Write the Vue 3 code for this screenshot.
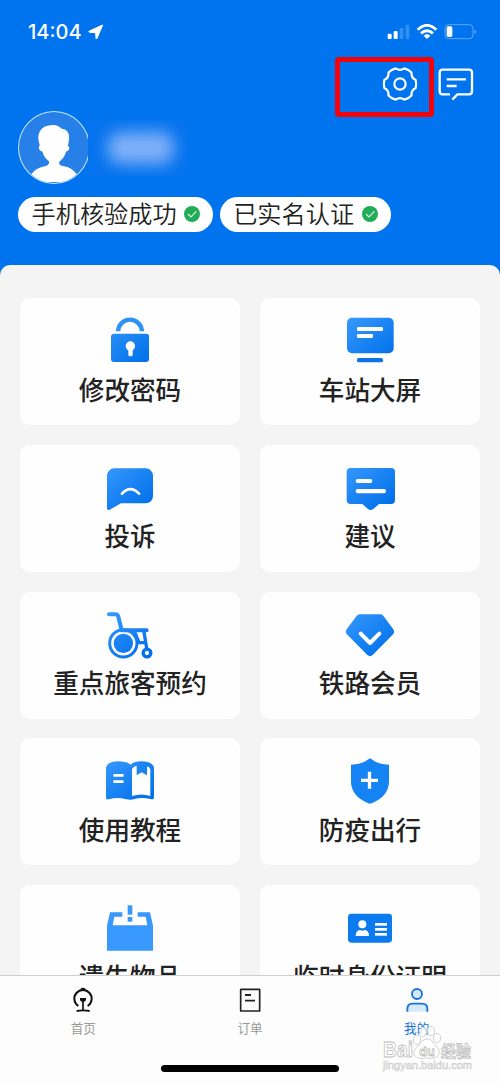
<script setup>
import { ref } from 'vue'

const services = [
  { icon: 'lock', label: '修改密码' },
  { icon: 'screen', label: '车站大屏' },
  { icon: 'complaint', label: '投诉' },
  { icon: 'suggestion', label: '建议' },
  { icon: 'wheelchair', label: '重点旅客预约' },
  { icon: 'member', label: '铁路会员' },
  { icon: 'book', label: '使用教程' },
  { icon: 'shield', label: '防疫出行' },
  { icon: 'lost', label: '遗失物品' },
  { icon: 'idcard', label: '临时身份证明' }
]

const badges = ['手机核验成功', '已实名认证']

const tabs = [
  { id: 'home', label: '首页' },
  { id: 'orders', label: '订单' },
  { id: 'mine', label: '我的' }
]

const activeTab = ref('mine')
</script>

<template>
  <div class="app">
    <header class="header">
      <div class="status">
        <div class="status__left">
          <span class="status__time">14:04</span>
          <svg class="status__arrow" viewBox="0 0 48 48">
            <path d="M44 3 27 43q-2 4-3 0L23 26 5 25q-5-1-1-4Z" fill="#fff" stroke="#fff" stroke-width="3" stroke-linejoin="round" />
          </svg>
        </div>
        <svg class="status__icons" viewBox="201 72 270 48">
          <g fill="#fff">
            <rect x="203" y="101" width="12" height="16" rx="3" />
            <rect x="221" y="93" width="12" height="24" rx="3" />
            <rect x="239" y="84" width="11" height="33" rx="3" opacity=".2" />
            <rect x="257" y="74" width="11" height="43" rx="3" opacity=".2" />
            <path d="M311 107q10-8 20 0l-10 10Z" />
          </g>
          <g fill="none" stroke="#fff" stroke-width="8.5">
            <path d="M293 89q28-26 56 0" />
            <path d="M303 100q18-16 36 0" />
          </g>
          <rect x="375" y="74" width="84" height="42" rx="11" fill="none" stroke="#fff" stroke-width="2.5" opacity=".45" />
          <rect x="380" y="79" width="17" height="32" rx="5" fill="#fff" />
          <path d="M464 89q7 6 0 13Z" fill="#fff" opacity=".6" />
        </svg>
      </div>

      <div class="actions">
        <button class="actions__button" type="button" aria-label="设置">
          <svg viewBox="0 0 120 120">
            <g fill="none" stroke="#fff" stroke-width="6.5" stroke-linejoin="round">
              <path d="M107 48Q110 60 107 72Q93 79 94.500 94.500Q86 104 73 107Q60 98 47 107Q34 104 25.500 94.500Q27 79 13 72Q10 60 13 48Q27 41 25.500 25.500Q34 16 47 13Q60 22 73 13Q86 16 94.500 25.500Q93 41 107 48Z" />
              <circle cx="60" cy="60" r="17" />
            </g>
          </svg>
        </button>
        <button class="actions__button" type="button" aria-label="消息">
          <svg viewBox="0 0 120 120">
            <g fill="none" stroke="#fff" stroke-width="7" stroke-linejoin="round">
              <path d="M42 91H20q-9 0-9-9V26q0-9 9-9H99q9 0 9 9V82q0 9-9 9H64L49 107" />
              <path d="M32 46H90M32 66H62" />
            </g>
          </svg>
        </button>
        <span class="actions__mark"></span>
      </div>

      <div class="profile">
        <div class="profile__avatar">
          <svg viewBox="54 34 216 216">
            <path d="M92 226Q105 207 136 201Q148 198 147 187Q130 174 126 156Q116 155 115 143L118 136Q109 112 118 94Q130 74 158 74Q174 73 186 86Q216 88 206 133L205 139Q213 143 206 153L199 157Q196 174 178 188Q177 199 190 201Q218 206 232 226Q200 256 162 256Q122 256 92 226Z" fill="#fff" />
          </svg>
        </div>
        <div class="profile__name"><span class="profile__blur"></span></div>
      </div>

      <div class="badges">
        <div v-for="badge in badges" :key="badge" class="badge">
          <span class="badge__label">{{ badge }}</span>
          <svg class="badge__check" viewBox="0 0 48 48">
            <circle cx="24" cy="24" r="24" fill="#22ac58" />
            <path d="M12 24l9 9 16-17" fill="none" stroke="#d8f5e2" stroke-width="3.5" />
          </svg>
        </div>
      </div>
    </header>

    <main class="panel">
      <div class="grid">
        <div v-for="item in services" :key="item.icon" class="card">
          <svg class="card__icon" viewBox="0 0 168 168">
            <defs>
              <linearGradient :id="`g-${item.icon}`" gradientUnits="userSpaceOnUse" x1="25" y1="20" x2="130" y2="150">
                <stop offset="0" stop-color="#3597fc" />
                <stop offset="1" stop-color="#0070ea" />
              </linearGradient>
            </defs>

            <g v-if="item.icon === 'lock'">
              <path d="M48.500 58a35.500 35 0 0 1 71 0" fill="none" stroke="#2f93f5" stroke-width="13" />
              <rect x="27" y="65" width="114" height="85" rx="9" fill="url(#g-lock)" />
              <circle cx="85" cy="102" r="14" fill="#fff" />
              <rect x="79" y="108" width="13" height="25" rx="5" fill="#fff" />
            </g>

            <g v-else-if="item.icon === 'screen'">
              <rect x="15" y="17" width="140" height="107" rx="15" fill="url(#g-screen)" />
              <rect x="45" y="45" width="78" height="12" rx="4" fill="#fff" />
              <rect x="45" y="66" width="48" height="12" rx="4" fill="#fff" />
              <rect x="45" y="138" width="78" height="13" rx="5" fill="#0e74e4" />
            </g>

            <g v-else-if="item.icon === 'complaint'">
              <path d="M37 28H131a22 22 0 0 1 22 22v61a22 22 0 0 1-22 22H57L23 152q-8 3-8-5V50a22 22 0 0 1 22-22Z" fill="url(#g-complaint)" />
              <path d="M60 104Q85 77 111 104" fill="none" stroke="#fff" stroke-width="8" stroke-linecap="round" />
            </g>

            <g v-else-if="item.icon === 'suggestion'">
              <path d="M26 27H147q12 0 12 12v84q0 12-12 12H111L94 150q-8 6-16 0L61 135H26q-12 0-12-12V39q0-12 12-12Z" fill="url(#g-suggestion)" />
              <rect x="41" y="60" width="50" height="12" rx="6" fill="#fff" />
              <rect x="41" y="90" width="91" height="13" rx="6" fill="#fff" />
            </g>

            <g v-else-if="item.icon === 'wheelchair'" fill="none" stroke="url(#g-wheelchair)" stroke-linecap="round">
              <path d="M21 25H40Q47 25 49 32L59 73L134 72.500" stroke-width="12" stroke-linejoin="round" />
              <circle cx="64" cy="112" r="41" stroke-width="9" />
              <circle cx="64" cy="112" r="29" fill="url(#g-wheelchair)" stroke="none" />
              <path d="M126 78L134 127M100 82L111 110H129" stroke-width="10" />
              <circle cx="135" cy="141" r="11.500" stroke-width="10" />
            </g>

            <g v-else-if="item.icon === 'member'">
              <path d="M53 25H115q6 0 10 6L155 71q4 7-1 13L92 147q-8 7-16 0L14 84q-5-6-1-13L43 31q4-6 10-6Z" fill="url(#g-member)" />
              <path d="M56 83L84 111L112 83" fill="none" stroke="#fff" stroke-width="12" stroke-linecap="round" stroke-linejoin="round" />
            </g>

            <g v-else-if="item.icon === 'book'">
              <path d="M12 46Q18 28 48 28Q74 28 86 38Q96 28 118 28Q150 28 156 46V136Q156 143 149 142Q120 134 98 141Q86 145 70 141Q45 135 20 142Q12 144 12 137Z" fill="url(#g-book)" />
              <path d="M90 51Q95 42 104 41V70L119 61L135 70V43Q145 47 145 54V132Q118 123 90 132Z" fill="#fff" />
              <rect x="34" y="66" width="31" height="8" rx="2" fill="#fff" />
              <rect x="34" y="85" width="31" height="8" rx="2" fill="#fff" />
            </g>

            <g v-else-if="item.icon === 'shield'">
              <path d="M84 19Q107 38 141 38V88Q141 132 91 153Q84 156 77 153Q27 132 27 88V38Q61 38 84 19Z" fill="#1483f4" />
              <path d="M57 85H108M82.500 59.500V110.500" stroke="#fff" stroke-width="10" />
            </g>

            <g v-else-if="item.icon === 'lost'" fill="#3898fc">
              <path d="M24 40H61V53H37L32 79H136L131 53H107V40H144L153 80V155H15V80Z" />
              <rect x="77" y="19" width="14" height="28" />
              <rect x="77" y="54" width="14" height="14" />
            </g>

            <g v-else>
              <rect x="18" y="44" width="132" height="87" rx="10" fill="#0c7bef" />
              <g fill="#fff">
                <circle cx="61" cy="76" r="12" />
                <path d="M41 111Q41 94 54 93Q61 97 68 93Q81 94 81 111Z" />
                <rect x="99" y="72" width="36" height="8" />
                <rect x="99" y="87" width="36" height="8" />
                <rect x="99" y="102" width="36" height="8" />
              </g>
            </g>
          </svg>
          <span class="card__label">{{ item.label }}</span>
        </div>
      </div>
    </main>

    <nav class="tabbar">
      <div class="tabbar__items">
        <button
          v-for="tab in tabs"
          :key="tab.id"
          class="tab"
          :class="{ 'tab--active': tab.id === activeTab }"
          type="button"
          @click="activeTab = tab.id"
        >
          <svg class="tab__icon" viewBox="0 0 84 84">
            <g v-if="tab.id === 'home'" fill="none" stroke="#111" stroke-width="6">
              <path d="M28 60A26 26 0 1 1 56 60" />
              <path d="M36 11Q42 6 48 11" />
              <path d="M42 42V73" stroke-width="5" />
              <path d="M23 75Q42 71 62 75" stroke-width="5.500" />
              <path d="M33 36H51V43L46 47H38L33 43Z" fill="#111" stroke="none" />
            </g>
            <g v-else-if="tab.id === 'orders'" fill="none" stroke="#222" stroke-width="5">
              <rect x="14" y="10" width="57" height="65" rx="1" />
              <path d="M27 27H45M27 44H57" stroke-width="5.500" />
            </g>
            <g v-else fill="#d6e8fb" stroke="#1474da" stroke-width="5.500">
              <circle cx="42" cy="24" r="15" />
              <path d="M13 77V69Q13 53 29 53H57Q73 53 73 69V77" />
            </g>
          </svg>
          <span class="tab__label">{{ tab.label }}</span>
        </button>
      </div>
      <div class="tabbar__indicator"></div>
    </nav>

    <div class="watermark">
      <svg viewBox="0 0 100 50">
        <g fill="#fff" fill-opacity=".8" stroke="#c6c6c6" stroke-width=".8">
          <ellipse cx="40" cy="17" rx="3.5" ry="4.5" />
          <ellipse cx="46" cy="9" rx="3.5" ry="4.5" />
          <ellipse cx="54" cy="8" rx="3.5" ry="4.5" />
          <ellipse cx="60" cy="15" rx="3.5" ry="4.5" />
          <path d="M50 16Q55 16 57 21Q65 28 61 33Q58 36 50 35Q41 37 37 32Q36 27 42 22Q45 16 50 16Z" />
        </g>
        <g class="watermark__text">
          <text x="6" y="34" font-size="22" textLength="30" lengthAdjust="spacingAndGlyphs">Bai</text>
          <text x="42" y="33" font-size="13">du</text>
          <text class="watermark__cjk" x="64" y="34" font-size="16" textLength="30" lengthAdjust="spacingAndGlyphs">经验</text>
          <text class="watermark__url" x="6" y="46" font-size="10.500" textLength="89" lengthAdjust="spacingAndGlyphs">jingyan.baidu.com</text>
        </g>
      </svg>
    </div>
  </div>
</template>

<style>
body {
  margin: 0;
}
</style>

<style scoped>
.app {
  position: relative;
  display: flex;
  flex-direction: column;
  width: 500px;
  height: 1082px;
  overflow: hidden;
  background: #0073ee;
  font-family: 'Noto Sans CJK SC', sans-serif;
}

button {
  padding: 0;
  border: none;
  background: none;
  font-family: inherit;
  cursor: pointer;
}

svg {
  display: block;
}

.header {
  flex: none;
  height: 265px;
}

.status {
  display: flex;
  align-items: center;
  justify-content: space-between;
  height: 64px;
  padding: 0 23px 0 28px;
}

.status__left {
  display: flex;
  align-items: center;
  gap: 6px;
}

.status__time {
  font-family: Inter, sans-serif;
  font-size: 20px;
  font-weight: 500;
  color: #fff;
}

.status__arrow {
  width: 16px;
  height: 16px;
}

.status__icons {
  width: 90px;
  height: 16px;
}

.actions {
  position: relative;
  display: flex;
  justify-content: flex-end;
  gap: 16px;
  height: 40px;
  padding-right: 24px;
}

.actions__button {
  width: 40px;
  height: 40px;
}

/* red highlight laid over the settings button */
.actions__mark {
  position: absolute;
  top: -7px;
  left: 335px;
  box-sizing: border-box;
  width: 99px;
  height: 60px;
  border: 5px solid #f3020c;
  border-radius: 4px;
}

.profile {
  display: flex;
  align-items: center;
  margin-top: 7px;
  padding-left: 18px;
}

.profile__avatar {
  box-sizing: border-box;
  width: 72px;
  height: 73px;
  overflow: hidden;
  border: 1.5px solid #c4e4fc;
  border-radius: 50%;
  background: #2680e8;
}

.profile__name {
  display: flex;
  align-items: center;
  width: 100px;
  height: 56px;
  margin-left: -2px;
  overflow: hidden;
  background: #0573ee;
}

.profile__blur {
  width: 66px;
  height: 32px;
  margin-left: 20px;
  border-radius: 12px;
  background: #80b0f8;
  filter: blur(8px);
}

.badges {
  display: flex;
  gap: 6.5px;
  margin-top: 13px;
  padding-left: 18px;
}

.badge {
  display: flex;
  align-items: center;
  gap: 7.5px;
  height: 34.5px;
  padding: 0 13px 0 13.5px;
  border-radius: 18px;
  background: #fff;
}

.badge__label {
  margin-top: -3px;
  font-size: 24.2px;
  font-weight: 350;
  line-height: 34px;
  color: #222;
}

.badge__check {
  width: 16px;
  height: 16px;
}

.panel {
  flex: 1;
  min-height: 0;
  overflow: hidden;
  padding: 33px 20px 0;
  border-radius: 10px 10px 0 0;
  background: #f4f4f4;
}

.grid {
  display: grid;
  grid-template-columns: 1fr 1fr;
  gap: 19.75px 20px;
}

.card {
  display: flex;
  flex-direction: column;
  align-items: center;
  box-sizing: border-box;
  height: 127px;
  padding-top: 14px;
  border-radius: 10px;
  background: #fefefe;
}

.card__icon {
  flex: none;
  width: 56px;
  height: 56px;
}

.card__label {
  margin-top: 1.5px;
  font-size: 25.6px;
  font-weight: 500;
  line-height: 37px;
  white-space: nowrap;
  color: #222;
}

.tabbar {
  flex: none;
  box-sizing: border-box;
  height: 107px;
  border-top: 1px solid #cfcfcf;
  background: #fdfdfd;
}

.tabbar__items {
  display: grid;
  grid-template-columns: repeat(3, 1fr);
  height: 89px;
}

.tab {
  display: flex;
  flex-direction: column;
  align-items: center;
  padding-top: 10px;
  color: #999;
}

.tab--active {
  color: #1474da;
}

.tab__icon {
  width: 28px;
  height: 28px;
}

.tab__label {
  margin-top: 4px;
  font-size: 12.6px;
  line-height: 19px;
}

.tabbar__indicator {
  width: 178px;
  height: 7px;
  margin: 0 auto;
  border-radius: 4px;
  background: #000;
}

.watermark {
  position: absolute;
  top: 1023px;
  left: 377px;
  width: 100px;
  height: 50px;
  pointer-events: none;
}

.watermark__text {
  font-family: 'Liberation Sans', sans-serif;
  font-weight: bold;
  fill: #fff;
  stroke: #bdbdbd;
  stroke-width: 0.8px;
}

.watermark__cjk {
  font-family: 'Noto Sans CJK SC', sans-serif;
}

.watermark__url {
  font-weight: normal;
  fill: #eee;
  stroke: #ccc;
  stroke-width: 0.5px;
}
</style>
